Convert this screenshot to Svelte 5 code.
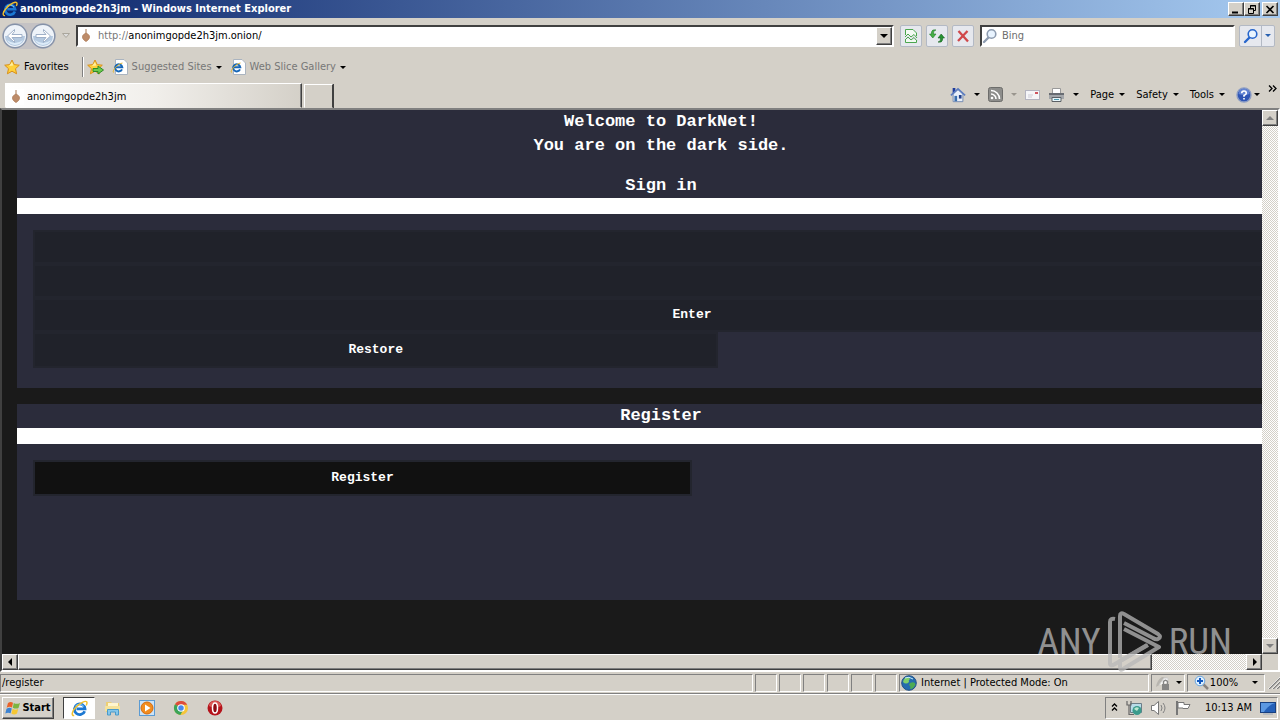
<script>
    let address = $state('anonimgopde2h3jm.onion/');
    let query = $state('');
    let login = $state('');
    let password = $state('');

    const panes = [1, 2, 3, 4, 5, 6];
</script>

{#snippet ie(size)}
    <svg width={size} height={size} viewBox="0 0 16 16" aria-hidden="true">
        <path d="M12.9 10.5A5 5 0 1 1 13.2 8.3H5.2" fill="none" stroke="#1c78d2" stroke-width="2.6" />
        <path d="M12 6.2A4.6 4.6 0 0 0 4.3 6" fill="none" stroke="#7cc8f6" stroke-width="1" />
        <path d="M3 14.6C.2 14.9.6 11 4.5 6.9C8.5 2.7 13.5.4 14.7 1.7C15.4 2.5 14.9 3.9 14.3 5" fill="none" stroke="#f2c02c" stroke-width="1.4" />
    </svg>
{/snippet}

{#snippet onion()}
    <svg width="16" height="16" viewBox="0 0 16 16" aria-hidden="true">
        <rect width="16" height="16" fill="#fff" />
        <path d="M8 1V6" stroke="#a97853" />
        <path d="M8 5C6.500 6 4.500 6.500 4.500 9C4.500 11.300 6.500 12.500 8 13.500C9.500 12.500 11.500 11.300 11.500 9C11.500 6.500 9.500 6 8 5Z" fill="#bd8b68" stroke="#b07f5c" stroke-width=".8" />
    </svg>
{/snippet}

{#snippet star()}
    <path d="M8 1L10.2 5.6L15.3 6.2L11.5 9.7L12.6 14.8L8 12.2L3.4 14.8L4.5 9.7L.7 6.2L5.8 5.6Z" fill="#ffd13b" stroke="#d9901a" />
    <path d="M8 3L9.3 6.6L5 7Z" fill="#fff0a0" />
{/snippet}

{#snippet page()}
    <svg width="16" height="16" viewBox="0 0 16 16" aria-hidden="true">
        <path d="M3.5.5H12L15.5 4V15.5H3.5Z" fill="#fff" stroke="#aab4c0" />
        <path d="M10 10.3A3.6 3.6 0 1 1 10.3 8.3H4" fill="none" stroke="#1767b8" stroke-width="2" />
        <path d="M1.5 13.5C0 12 5 5 10.5 4" fill="none" stroke="#e5b52b" />
    </svg>
{/snippet}

{#snippet lens(color)}
    <svg width="16" height="16" viewBox="0 0 16 16" aria-hidden="true">
        <path d="M6.5 9.5L2 14" stroke={color} stroke-width="2.4" stroke-linecap="round" />
        <circle cx="9.5" cy="6" r="4.3" fill="#e9f4ff" stroke={color} stroke-width="1.6" />
    </svg>
{/snippet}

{#snippet round(flip)}
    <svg width="26" height="26" viewBox="0 0 26 26" aria-hidden="true">
        <circle cx="13" cy="13" r="11.8" fill="#eef3f9" stroke="#8592a8" stroke-width="1.4" />
        <path d="M3 13A10 10 0 0 0 23 13Z" fill="#b4c9e0" />
        <path d="M5 17A9 9 0 0 0 21 17Q13 23 5 17Z" fill="#dcebf8" />
        <g transform={flip ? 'rotate(180 13 13)' : ''}>
            <path d="M5.5 13L12.5 6.5V8.5L10 11.5H20V14.500H10L12.500 17.500V19.500Z" fill="#fff" stroke="#9fb0c8" />
        </g>
    </svg>
{/snippet}

<div class="screen">
    <header class="titlebar">
        {@render ie(16)}
        <h1>anonimgopde2h3jm - Windows Internet Explorer</h1>
        <div class="window-buttons">
            <button aria-label="Minimize">
                <svg width="10" height="9"><path d="M1 7.5H7" stroke="#000" stroke-width="2" /></svg>
            </button>
            <button aria-label="Restore window">
                <svg width="10" height="9"><path d="M3.5 3V.5H8.5V5.5H6.5M3 1H9M1.5 3.5H6.5V8.5H1.5ZM1 4H7" fill="none" stroke="#000" /></svg>
            </button>
            <button class="close" aria-label="Close">
                <svg width="10" height="9"><path d="M1.5 1L8.5 8M8.5 1L1.5 8" stroke="#000" stroke-width="1.6" /></svg>
            </button>
        </div>
    </header>

    <div class="navbar">
        <div class="travel">
            <button aria-label="Back">{@render round(false)}</button>
            <button aria-label="Forward">{@render round(true)}</button>
        </div>
        <button class="recent" aria-label="Recent pages">
            <svg width="8" height="5"><path d="M.5.5H7.5L4 4.5Z" fill="#ddd" stroke="#aaa69c" /></svg>
        </button>
        <div class="address">
            {@render onion()}
            <label for="address">http://</label>
            <input id="address" type="text" bind:value={address} />
            <button aria-label="Show address list"><i class="arrow big"></i></button>
        </div>
        <button class="square" aria-label="Compatibility view">
            <svg width="14" height="16" viewBox="0 0 14 16">
                <path d="M1.5 7V1.5H9L12.5 5V8M1.5 11V14.5H12.5V12" fill="#f3faf3" stroke="#4ba64f" />
                <path d="M1 9L4 6L7 9L10 6.5L13 10M1 12L4 9L7 12L10 9.5L13 13" fill="none" stroke="#4ba64f" />
            </svg>
        </button>
        <button class="square" aria-label="Refresh">
            <svg width="16" height="16" viewBox="0 0 16 16">
                <path d="M7 2Q4.5 2 4.5 5V6H7L3.8 10L.5 6H2.5V4Q3 1 7 2Z" fill="#45b045" stroke="#237a28" stroke-width=".6" />
                <path d="M9 14Q11.5 14 11.5 11V10H9L12.2 6L15.5 10H13.5V12Q13 15 9 14Z" fill="#269332" stroke="#17631e" stroke-width=".6" />
            </svg>
        </button>
        <button class="square" aria-label="Stop">
            <svg width="14" height="14" viewBox="0 0 14 14"><path d="M2.5 2L12 12.5M11.5 2L2 12" stroke="#d0484b" stroke-width="2.3" /></svg>
        </button>
        <div class="search">
            {@render lens('#8e9cb0')}
            <input type="text" aria-label="Search" placeholder="Bing" bind:value={query} />
        </div>
        <div class="search-buttons">
            <button aria-label="Search">{@render lens('#2766cc')}</button>
            <button class="narrow" aria-label="Search options"><i class="arrow blue"></i></button>
        </div>
    </div>

    <nav class="favorites">
        <button class="fav">
            <svg width="16" height="16" viewBox="0 0 16 16" aria-hidden="true">{@render star()}</svg>
            Favorites
        </button>
        <button class="add" aria-label="Add to Favorites Bar">
            <svg width="17" height="16" viewBox="0 0 17 16">
                {@render star()}
                <path d="M6 9.5H11V7L16.5 11L11 15V12.5H6Z" fill="#6ccb4f" stroke="#2f8a27" />
            </svg>
        </button>
        <button class="link">{@render page()} Suggested Sites <i class="arrow"></i></button>
        <button class="link">{@render page()} Web Slice Gallery <i class="arrow"></i></button>
    </nav>

    <div class="tabrow">
        <button class="tab">{@render onion()} anonimgopde2h3jm</button>
        <button class="newtab" aria-label="New tab"></button>
        <div class="commands">
            <button aria-label="Home">
                <svg width="16" height="18" viewBox="0 0 18 18">
                    <path d="M3.5 8V16.5H14.5V8L9 3Z" fill="#e8effa" stroke="#6b84ad" />
                    <path d="M3 1H6V5L3 8Z" fill="#1e3c9c" />
                    <path d="M1 9.5L9 2L17 9.5" fill="none" stroke="#5b7cc0" stroke-width="1.8" />
                    <path d="M5 10H8V16H5Z" fill="#3a6fae" />
                    <path d="M10 9H13V13H10Z" fill="#213f8a" />
                </svg>
                <i class="arrow"></i>
            </button>
            <button aria-label="Feeds">
                <svg width="15" height="15" viewBox="0 0 15 15">
                    <rect x=".5" y=".5" width="14" height="14" rx="2" fill="#8d8d8b" stroke="#6d6d6b" />
                    <path d="M3 7A5 5 0 0 1 8 12M3 3.5A8.5 8.5 0 0 1 11.5 12" fill="none" stroke="#fff" stroke-width="1.6" />
                    <circle cx="4" cy="11" r="1.3" fill="#fff" />
                </svg>
                <i class="arrow pale"></i>
            </button>
            <button aria-label="Read mail">
                <svg width="15" height="12" viewBox="0 0 15 12">
                    <rect x=".5" y="1.5" width="14" height="9" fill="#f5f5f8" stroke="#b4b4c0" />
                    <path d="M10 3H13V5H10Z" fill="#cf5560" />
                    <path d="M3 6H8M3 8H7" stroke="#cccbd6" />
                </svg>
            </button>
            <button aria-label="Print">
                <svg width="17" height="16" viewBox="0 0 17 16">
                    <path d="M4.5 6V1.5H12.5V6" fill="#fff" stroke="#999" />
                    <path d="M1 6H16V12H1Z" fill="#a3a6aa" />
                    <path d="M1 6H16V8H1Z" fill="#686c72" />
                    <path d="M4 10.5H13V14.5H4Z" fill="#e8f6fa" stroke="#5b6065" />
                    <path d="M6 12.5H11" stroke="#4d9aaf" />
                </svg>
                <i class="arrow"></i>
            </button>
            <button class="menu">Page <i class="arrow"></i></button>
            <button class="menu">Safety <i class="arrow"></i></button>
            <button class="menu">Tools <i class="arrow"></i></button>
            <button class="help" aria-label="Help">
                <svg width="16" height="16" viewBox="0 0 16 16">
                    <circle cx="8" cy="8" r="7" fill="#2f55b4" stroke="#8b9cc4" stroke-width="1.4" />
                    <path d="M2.5 7A5.5 5.5 0 0 1 13.5 7Q8 9 2.5 7Z" fill="#6283d2" />
                    <path d="M5.7 6.3Q5.7 4 8 4T10.3 6.2Q10.3 7.3 8 8.5V9.8M8 11V12.6" fill="none" stroke="#fff" stroke-width="1.6" />
                </svg>
                <i class="arrow"></i>
            </button>
            <button class="more" aria-label="More commands">
                <svg width="9" height="7"><path d="M1 .5L4 3.5L1 6.5M5 .5L8 3.5L5 6.5" fill="none" stroke="#000" stroke-width="1.3" /></svg>
            </button>
        </div>
    </div>

    <div class="viewport">
        <main>
            <section>
                <p>Welcome to DarkNet!</p>
                <p>You are on the dark side.</p>
                <h2 class="signin">Sign in</h2>
                <div class="rule"></div>
                <form onsubmit={(e) => e.preventDefault()}>
                    <input type="text" aria-label="Login" bind:value={login} />
                    <input type="password" aria-label="Password" bind:value={password} />
                    <button type="submit">Enter</button>
                    <button type="button" class="restore">Restore</button>
                </form>
            </section>
            <section class="register">
                <h2>Register</h2>
                <div class="rule"></div>
                <form onsubmit={(e) => e.preventDefault()}>
                    <button type="submit" class="dark">Register</button>
                </form>
            </section>
        </main>
        <div class="vscroll">
            <button disabled aria-label="Scroll up"><i class="arrow up gray"></i></button>
            <button disabled aria-label="Scroll down"><i class="arrow gray"></i></button>
        </div>
        <div class="hscroll">
            <button aria-label="Scroll left"><svg width="5" height="8"><path d="M4 0V8L0 4Z" /></svg></button>
            <div class="thumb"></div>
            <span></span>
            <button aria-label="Scroll right"><svg width="5" height="8"><path d="M1 0V8L5 4Z" /></svg></button>
        </div>

        <div class="watermark">
            <span>ANY</span>
            <svg width="56" height="62" viewBox="0 0 56 62" aria-hidden="true">
                <path d="M8 8Q3 7 3 11V52Q3 56 8 53L41 34" />
                <path d="M13 47V5Q13 1 17 3L51 23Q55 26 51 28Q49 29 46 27L17 12" />
                <path d="M17 18L52 36L16 58Q13 60 13 56V50L40 34" />
            </svg>
            <span>RUN</span>
        </div>
    </div>

    <footer class="status">
        <div class="pane wide">/register</div>
        {#each panes as n (n)}
            <div class="pane small"></div>
        {/each}
        <div class="pane zone">
            <svg width="16" height="16" viewBox="0 0 16 16" aria-hidden="true">
                <circle cx="8" cy="8" r="7.3" fill="#246cae" stroke="#235186" />
                <path d="M3 4Q7 0 9 4Q7 5 8 7Q5 10 2 7Z" fill="#7fd06a" />
                <path d="M9 8Q13 6 14.5 9Q13 14 9 14Q10 11 8 10Z" fill="#4cab53" />
                <path d="M4 3Q8 1 12 4" fill="none" stroke="#c5ebff" />
            </svg>
            Internet | Protected Mode: On
        </div>
        <button class="pane lock" aria-label="InPrivate filtering">
            <svg width="16" height="16" viewBox="0 0 16 16">
                <path d="M1 12Q2 5 7 2L13 3L12 8L6 9Z" fill="#b8b5af" />
                <path d="M4 10L9 3H13V8" fill="#f8f8f8" stroke="#ccc" />
                <rect x="7" y="9" width="7" height="6" fill="#858585" />
                <path d="M8.5 9V6.5Q10.5 4 12.5 6.5V9" fill="none" stroke="#858585" stroke-width="1.4" />
            </svg>
            <i class="arrow"></i>
        </button>
        <button class="pane zoom">
            <svg width="16" height="16" viewBox="0 0 16 16" aria-hidden="true">
                <path d="M9 9L14 14" stroke="#8b8580" stroke-width="2.5" />
                <circle cx="6" cy="6" r="4.8" fill="#dff0ff" stroke="#69a5de" />
                <path d="M6 3V9M3 6H9" stroke="#1359bf" stroke-width="2" />
            </svg>
            100% <i class="arrow"></i>
        </button>
        <svg class="grip" width="13" height="13"><path d="M2 13L13 2M6 13L13 6M10 13L13 10" stroke="#808080" stroke-width="1.4" /><path d="M1 13L13 1M5 13L13 5M9 13L13 9" stroke="#fff" stroke-width=".7" /></svg>
    </footer>

    <div class="taskbar">
        <button class="start">
            <svg width="16" height="16" viewBox="0 0 16 16" aria-hidden="true">
                <path d="M3 3Q5.5 1 8 2.7L7 7.5Q4.5 6 1.7 7.7Z" fill="#ea6228" />
                <path d="M8.8 3Q11.5 4.7 15 3L13.5 8Q11 9.3 7.8 7.7Z" fill="#7cb540" />
                <path d="M1.5 8.7Q4.5 7 6.8 8.5L5.6 13.3Q3 12 .3 13.5Z" fill="#3c83d2" />
                <path d="M7.6 8.8Q10.5 10.5 13.2 9L12 13.6Q9 15.3 6.4 13.6Z" fill="#f6c733" />
            </svg>
            Start
        </button>
        <button class="task active" aria-label="Internet Explorer">{@render ie(17)}</button>
        <button class="task" aria-label="Explorer">
            <svg width="18" height="18" viewBox="0 0 18 18">
                <path d="M2 3H7L8 4H15V13H2Z" fill="#edcf74" />
                <path d="M4 4H14V8H4Z" fill="#fff6cf" />
                <path d="M1 7H16V12H1Z" fill="#f5e39c" />
                <path d="M3.5 16V10.5H14.5V16H11.5V13H6.5V16Z" fill="#85c7ec" stroke="#4a9ac9" />
            </svg>
        </button>
        <button class="task" aria-label="Media Player">
            <svg width="18" height="18" viewBox="0 0 18 18">
                <rect x="1.5" y="1.5" width="15" height="15" fill="#cde3f6" stroke="#5b9bd3" />
                <circle cx="9" cy="9" r="6" fill="#f28c1e" stroke="#d56b0e" />
                <path d="M7 5.5L12.5 9L7 12.5Z" fill="#fff" />
            </svg>
        </button>
        <button class="task" aria-label="Chrome">
            <svg width="16" height="16" viewBox="0 0 16 16">
                <circle cx="8" cy="8" r="7" fill="#f5c53a" />
                <path d="M8 8L2 4.3A7 7 0 0 1 14.2 4.8H8Z" fill="#dd4b3d" />
                <path d="M8 8L2 4.3A7 7 0 0 0 7.3 15L10.5 9.5Z" fill="#3ca458" />
                <circle cx="8" cy="8" r="3.3" fill="#4788ec" stroke="#fff" stroke-width="1.1" />
            </svg>
        </button>
        <button class="task" aria-label="Opera">
            <svg width="16" height="16" viewBox="0 0 16 16">
                <circle cx="8" cy="8" r="7.5" fill="#b5131b" />
                <path d="M2 6A6 5 0 0 1 14 6Q8 9 2 6Z" fill="#dc5a57" />
                <ellipse cx="8" cy="8" rx="2.5" ry="5" fill="#8c0b12" stroke="#fff" stroke-width="1.5" />
            </svg>
        </button>
        <div class="tray">
            <button aria-label="Show hidden icons">
                <svg width="7" height="12"><path d="M1 4.5L3.5 2L6 4.5M1 8.5L3.5 6L6 8.5" fill="none" stroke="#000" stroke-width="1.3" /></svg>
            </button>
            <svg width="16" height="16" viewBox="0 0 16 16" aria-hidden="true">
                <path d="M4.5 3.5H15.5V12.5H4.5Z" fill="#b8dce8" stroke="#6a7d88" />
                <path d="M1 1V5H5V1M3 5V14.5H8" fill="none" stroke="#666" stroke-width="1.2" />
                <circle cx="11" cy="10.5" r="4.5" fill="#3b9b8c" />
                <path d="M8 9Q10 6 13 8L11 11Z" fill="#bce8d0" />
            </svg>
            <svg width="17" height="16" viewBox="0 0 17 16" aria-hidden="true">
                <path d="M1.5 5.5H4L8.5 1.5V14.5L4 10.5H1.5Z" fill="#fff" stroke="#777" />
                <path d="M11 5Q13 8 11 11M13 3Q17 8 13 13" fill="none" stroke="#808080" />
            </svg>
            <svg width="16" height="16" viewBox="0 0 16 16" aria-hidden="true">
                <path d="M2 1V15" stroke="#777" stroke-width="2" />
                <path d="M3 2.5H9V4.5H15L13 8.5H8V8H3Z" fill="#fff" stroke="#777" />
            </svg>
            <time>10:13 AM</time>
            <button aria-label="Show desktop">
                <svg width="16" height="14" viewBox="0 0 16 14">
                    <rect x=".5" y="1.5" width="15" height="10" fill="#2460b8" stroke="#184080" />
                    <path d="M1 2H15Q8 4 4 11H1Z" fill="#5b98e2" />
                    <path d="M3 13H13" stroke="#9aa6b8" />
                </svg>
            </button>
        </div>
    </div>
</div>

<style>
    :global(body) {
        margin: 0;
        overflow: hidden;
    }

    .screen {
        --face: #d4d0c8;
        --shade: #808080;
        display: flex;
        flex-direction: column;
        min-height: 100vh;
        background: var(--face);
        color: #000;
        font-family: Tahoma, "DejaVu Sans Condensed", "DejaVu Sans", sans-serif;
        font-size: 11px;
        line-height: 14px;
    }

    .screen * {
        box-sizing: border-box;
    }

    svg {
        display: block;
        flex: none;
    }

    button {
        display: flex;
        align-items: center;
        justify-content: center;
        padding: 0;
        border: none;
        background: transparent;
        color: inherit;
        font: inherit;
        white-space: nowrap;
    }

    input {
        min-width: 0;
        border: none;
        outline: none;
        padding: 0;
        font: inherit;
    }

    .arrow {
        flex: none;
        border: 3px solid transparent;
        border-top-color: #000;
        border-bottom: none;
    }

    .arrow.up {
        transform: rotate(180deg);
    }

    .arrow.blue {
        border-top-color: #2860b0;
    }

    .arrow.pale {
        border-top-color: #99958e;
    }

    .arrow.big,
    .arrow.gray {
        border-width: 4px;
        border-bottom: none;
    }

    .arrow.gray {
        border-top-color: var(--shade);
    }

    .titlebar {
        display: flex;
        align-items: center;
        gap: 2px;
        height: 18px;
        padding: 0 2px;
        background: linear-gradient(90deg, #0a246a, #a6caf0);
        color: #fff;
    }

    .titlebar h1 {
        flex: 1;
        margin: 0;
        font-size: 11px;
        font-weight: bold;
    }

    .window-buttons {
        display: flex;
    }

    .window-buttons button,
    .address button,
    .vscroll button,
    .hscroll button,
    .thumb {
        background: var(--face);
        border: 1px solid;
        border-color: #fff #404040 #404040 #fff;
        box-shadow: inset -1px -1px var(--shade);
    }

    .window-buttons button {
        width: 16px;
        height: 14px;
    }

    .window-buttons .close {
        margin-left: 2px;
    }

    .navbar {
        display: flex;
        align-items: center;
        height: 35px;
        padding: 0 5px 0 2px;
        gap: 4px;
    }

    .travel {
        display: flex;
        gap: 2px;
        border-radius: 14px;
        background: #c4c2c4;
    }

    .recent {
        width: 12px;
    }

    .address,
    .search {
        display: flex;
        align-items: center;
        height: 22px;
        background: #fff;
        border: 2px solid;
        border-color: #404040 #fff #fff #404040;
    }

    .address {
        flex: 1;
        margin-right: 2px;
    }

    .address label {
        margin-left: 4px;
        color: #777;
    }

    .address input,
    .search input {
        flex: 1;
    }

    .address button {
        width: 16px;
        height: 18px;
    }

    .search {
        width: 255px;
        margin-left: 2px;
        gap: 4px;
    }

    .search input::placeholder {
        color: #6d6d6d;
        opacity: 1;
    }

    .square,
    .search-buttons {
        width: 22px;
        height: 22px;
        border: 1px solid #b3b9c4;
        border-radius: 2px;
        background: #e6e8ee;
    }

    .search-buttons {
        display: flex;
        width: 36px;
    }

    .search-buttons button {
        flex: 1;
    }

    .search-buttons .narrow {
        flex: none;
        width: 13px;
        border-left: 1px solid #b3b9c4;
    }

    .favorites {
        display: flex;
        align-items: center;
        height: 28px;
        padding-left: 4px;
    }

    .favorites button {
        gap: 4px;
    }

    .favorites .add {
        height: 20px;
        margin-left: 13px;
        padding-left: 4px;
        border-left: 1px solid var(--shade);
        box-shadow: inset 1px 0 #fff;
    }

    .favorites .link {
        margin-left: 8px;
        color: #777;
    }

    .tabrow {
        display: flex;
        align-items: flex-end;
        height: 27px;
        padding-left: 5px;
    }

    .tab {
        justify-content: flex-start;
        gap: 3px;
        width: 297px;
        height: 25px;
        padding: 2px 0 0 2px;
        border: 1px solid;
        border-color: #fff #404040 transparent #fff;
        box-shadow: inset -1px 0 var(--shade);
        background: linear-gradient(90deg, #fff, #f1efeb 50%, var(--face));
    }

    .newtab {
        width: 29px;
        height: 24px;
        margin-left: 2px;
        border: 1px solid;
        border-color: #fff #404040 transparent #fff;
        box-shadow: 1px 0 #404040;
    }

    .commands {
        display: flex;
        align-items: center;
        align-self: center;
        height: 24px;
        margin-left: auto;
        padding-right: 3px;
        gap: 8px;
    }

    .commands button {
        gap: 8px;
    }

    .commands .menu {
        gap: 5px;
    }

    .commands .menu,
    .commands .help {
        margin-left: 3px;
    }

    .commands .help {
        gap: 2px;
    }

    .commands .more {
        align-self: flex-start;
        margin-top: 2px;
    }

    .viewport {
        position: relative;
        flex: 1;
        display: grid;
        grid-template-columns: minmax(0, 1fr) 16px;
        grid-template-rows: 1fr 16px;
        border: 2px solid;
        border-color: #404040 #fff #fff #404040;
        border-top-color: var(--shade);
    }

    main {
        overflow: hidden;
        padding-left: 15px;
        background: #1a1a1a;
        color: #fff;
        font-family: "Courier New", "Liberation Mono", monospace;
        font-weight: bold;
    }

    /* the page is wider than its window, the rest scrolls out on the right */
    section {
        margin: 0 -43px 16px 0;
        background: #2b2c3b;
    }

    section p,
    section h2 {
        margin: 0;
        font-size: 17px;
        font-weight: bold;
        line-height: 24px;
        text-align: center;
    }

    section .signin {
        margin-top: 16px;
    }

    .rule {
        height: 16px;
        background: #fff;
    }

    form {
        display: flex;
        flex-direction: column;
        margin-right: -62px;
        padding: 16px 16px 20px;
    }

    form input,
    form button {
        height: 34px;
        border: 2px solid #23252e;
        background: #20222a;
        color: #fff;
        font-size: 13px;
        font-weight: bold;
    }

    form .restore {
        width: 52%;
        height: 36px;
    }

    .register {
        min-height: 196px;
        margin-bottom: 54px;
    }

    form .dark {
        width: 50%;
        height: 36px;
        background: #111;
    }

    .vscroll,
    .hscroll {
        display: flex;
        justify-content: space-between;
        background: repeating-conic-gradient(#fff 0 25%, var(--face) 0 50%) 0 0 / 2px 2px;
    }

    .vscroll {
        flex-direction: column;
    }

    .vscroll button,
    .hscroll button {
        width: 16px;
        height: 16px;
    }

    .thumb {
        flex: 12;
    }

    .hscroll span {
        flex: 1;
    }

    .watermark {
        position: absolute;
        right: 46px;
        bottom: -3px;
        display: flex;
        align-items: center;
        gap: 6px;
        color: #b8b8b8;
        font-family: "Liberation Sans Narrow", "Roboto Condensed", "DejaVu Sans Condensed", sans-serif;
        font-size: 37px;
        line-height: 40px;
        opacity: 0.75;
        pointer-events: none;
    }

    .watermark path {
        fill: none;
        stroke: #b8b8b8;
        stroke-width: 4;
        stroke-linejoin: round;
    }

    .status {
        display: flex;
        align-items: center;
        height: 22px;
        gap: 2px;
        border-bottom: 1px solid var(--shade);
    }

    .pane {
        display: flex;
        align-items: center;
        height: 18px;
        border: 1px solid;
        border-color: var(--shade) #fff #fff var(--shade);
    }

    .wide {
        flex: 1;
        padding-left: 1px;
    }

    .small {
        width: 22px;
    }

    .zone {
        width: 250px;
        padding-left: 1px;
        gap: 4px;
    }

    .lock {
        width: 34px;
        gap: 5px;
    }

    .zoom {
        width: 78px;
        gap: 0;
    }

    .zoom .arrow {
        margin-left: 14px;
    }

    .taskbar {
        display: flex;
        align-items: center;
        height: 27px;
        padding: 0 2px;
        border-top: 1px solid #fff;
    }

    .start {
        gap: 1px;
        width: 52px;
        height: 22px;
        margin-right: 9px;
        border: 1px solid;
        border-color: #fff #404040 #404040 #fff;
        box-shadow: inset -1px -1px var(--shade);
        font-weight: bold;
    }

    .task {
        width: 34px;
        height: 22px;
    }

    .active {
        width: 32px;
        margin-right: 1px;
        background: #fff;
        border: 1px solid;
        border-color: #404040 #fff #fff #404040;
    }

    .tray {
        display: flex;
        align-items: center;
        height: 22px;
        margin-left: auto;
        padding: 0 1px 0 5px;
        gap: 8px;
        border: 1px solid;
        border-color: var(--shade) #fff #fff var(--shade);
    }

    time {
        margin-left: 6px;
    }
</style>
